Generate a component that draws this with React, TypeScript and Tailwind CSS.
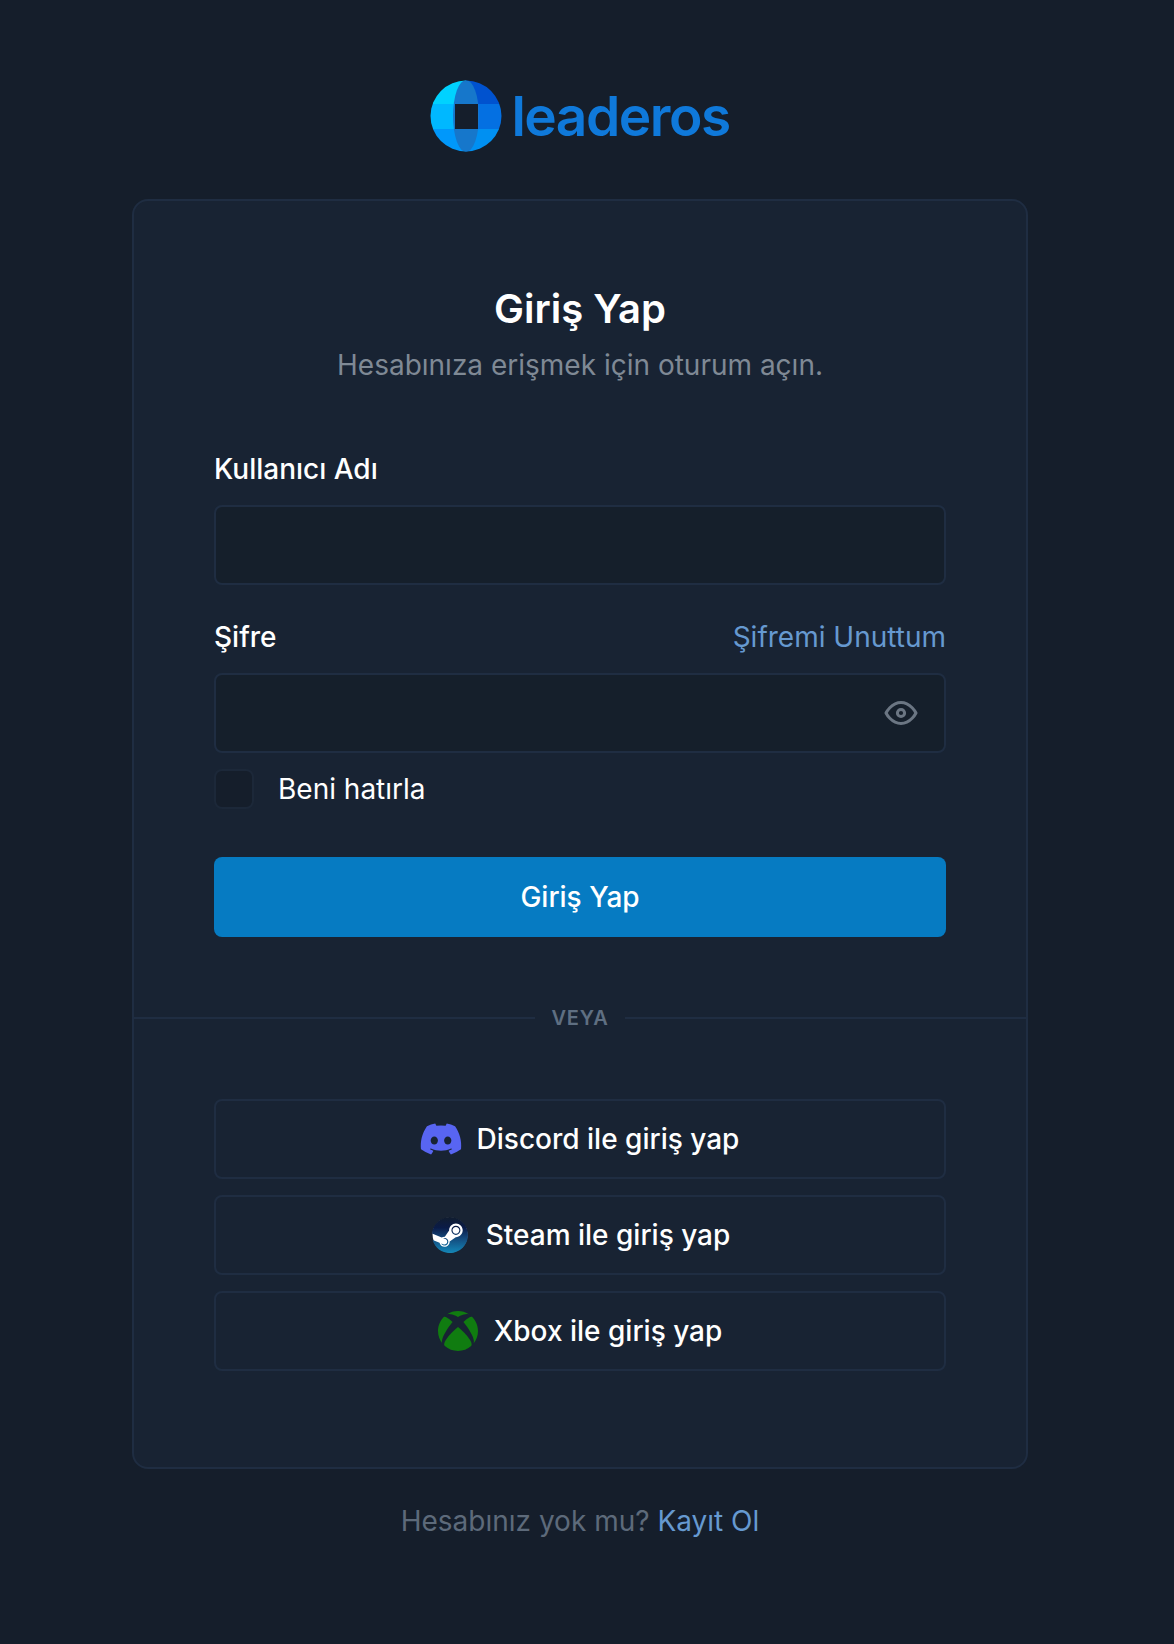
import { FaDiscord } from "react-icons/fa6";

function LeaderosLogo() {
  return (
    <div className="flex items-center gap-[9px]">
      <svg width="72" height="72" viewBox="0 0 72 72">
        <defs>
          <clipPath id="globe">
            <circle cx="36" cy="36" r="35.5" />
          </clipPath>
        </defs>
        <g clipPath="url(#globe)">
          <rect x="0" y="0" width="36" height="24" fill="#00d2ff" />
          <rect x="0" y="24" width="36" height="25" fill="#00b8ff" />
          <rect x="0" y="49" width="36" height="23" fill="#0098fb" />
          <rect x="36" y="0" width="36" height="24" fill="#0052cf" />
          <rect x="36" y="24" width="36" height="25" fill="#0470e2" />
          <rect x="36" y="49" width="36" height="23" fill="#0090f2" />
          <ellipse cx="36" cy="36" rx="13" ry="36" fill="#1677cb" />
          <rect x="25" y="24" width="23" height="25" fill="#151e2b" />
        </g>
      </svg>
      <span className="text-[55px] leading-none font-semibold tracking-[-1.5px] text-[#0f79da]">leaderos</span>
    </div>
  );
}

function SteamIcon() {
  return (
    <div className="flex w-10 justify-center">
      <svg width="36" height="36" viewBox="0 0 24 24">
        <defs>
          <linearGradient id="steam" x1="0" y1="0" x2="0" y2="1">
            <stop offset="0" stopColor="#111d2e" />
            <stop offset="0.3" stopColor="#0a1b48" />
            <stop offset="0.6" stopColor="#144b7e" />
            <stop offset="1" stopColor="#1387b8" />
          </linearGradient>
        </defs>
        <circle cx="12" cy="12" r="11.6" fill="#ffffff" />
        <path
          fill="url(#steam)"
          d="M11.979 0C5.678 0 .511 4.86.022 11.037l6.432 2.658c.545-.371 1.203-.59 1.912-.59.063 0 .125.004.188.006l2.861-4.142V8.91c0-2.495 2.028-4.524 4.524-4.524 2.494 0 4.524 2.031 4.524 4.527s-2.03 4.525-4.524 4.525h-.105l-4.076 2.911c0 .052.004.105.004.159 0 1.875-1.515 3.396-3.39 3.396-1.635 0-3.016-1.173-3.331-2.727L.436 15.27C1.862 20.307 6.486 24 11.979 24c6.627 0 11.999-5.373 11.999-12S18.605 0 11.979 0zM7.54 18.21l-1.473-.61c.262.543.714.999 1.314 1.25 1.297.539 2.793-.076 3.332-1.375.263-.63.264-1.319.005-1.949s-.75-1.121-1.377-1.383c-.624-.26-1.29-.249-1.878-.03l1.523.63c.956.4 1.409 1.5 1.009 2.455-.397.957-1.497 1.41-2.454 1.012H7.54zm11.415-9.303c0-1.662-1.353-3.015-3.015-3.015-1.665 0-3.015 1.353-3.015 3.015 0 1.665 1.35 3.015 3.015 3.015 1.663 0 3.015-1.35 3.015-3.015zm-5.273-.005c0-1.252 1.013-2.266 2.265-2.266 1.249 0 2.266 1.014 2.266 2.266 0 1.251-1.017 2.265-2.266 2.265-1.253 0-2.265-1.014-2.265-2.265z"
        />
      </svg>
    </div>
  );
}

function XboxIcon() {
  return (
    <svg width="40" height="40" viewBox="0 0 24 24" fill="#107c10">
      <path d="M4.102 21.033C6.211 22.881 8.977 24 12 24c3.026 0 5.789-1.119 7.902-2.967 1.877-1.912-4.316-8.709-7.902-11.417-3.582 2.708-9.779 9.505-7.898 11.417zm11.16-14.406c2.5 2.961 7.484 10.313 6.076 12.912C23.002 17.48 24 14.861 24 12.004c0-3.34-1.365-6.362-3.57-8.536 0 0-.027-.022-.082-.042-.063-.022-.152-.045-.281-.045-.592 0-1.985.434-4.805 3.246zM3.654 3.426c-.057.02-.082.041-.086.042C1.365 5.642 0 8.664 0 12.004c0 2.854.998 5.473 2.661 7.533-1.401-2.605 3.579-9.951 6.08-12.91-2.82-2.813-4.216-3.247-4.806-3.247-.131 0-.223.021-.281.046zM12 3.551S9.055 1.828 6.755 1.746c-.903-.033-1.454.295-1.521.339C7.379.646 9.659 0 11.984 0H12c2.334 0 4.605.646 6.766 2.085-.068-.046-.615-.372-1.52-.339C14.946 1.828 12 3.545 12 3.545v.006z" />
    </svg>
  );
}

function EyeIcon() {
  return (
    <svg
      width="36"
      height="36"
      viewBox="0 0 24 24"
      fill="none"
      stroke="#6b7683"
      strokeWidth="2"
      strokeLinejoin="round"
      className="absolute top-[22px] right-[27px]"
    >
      <path d="M2 12s3.5-7 10-7 10 7 10 7-3.5 7-10 7-10-7-10-7Z" />
      <circle cx="12" cy="12" r="2.4" />
    </svg>
  );
}

const SOCIALS = [
  { label: "Discord ile giriş yap", icon: <FaDiscord size={44} className="-mx-[2px] text-[#5865f2]" /> },
  { label: "Steam ile giriş yap", icon: <SteamIcon /> },
  { label: "Xbox ile giriş yap", icon: <XboxIcon /> },
];

export default function App() {
  return (
    <div className="min-h-[1644px] bg-[#151e2b] pt-[80px] pr-[14px] font-['Inter',sans-serif] text-white antialiased">
      <div className="flex justify-center">
        <LeaderosLogo />
      </div>

      <div className="mx-auto mt-[47px] w-[896px] rounded-2xl border-2 border-[#1f2d42] bg-[#182333] pt-[80px] pb-[96px]">
        <div className="text-center">
          <h1 className="text-[40px] leading-[56px] font-semibold">Giriş Yap</h1>
          <p className="text-[28px] leading-[56px] text-[#7f8995]">Hesabınıza erişmek için oturum açın.</p>
        </div>

        <form className="mt-[56px] flex flex-col px-20">
          <label className="text-[28px] leading-[40px] font-medium">Kullanıcı Adı</label>
          <input className="mt-[16px] h-20 rounded-lg border-2 border-[#1f2d42] bg-[#151f2b]" />

          <div className="mt-[32px] flex items-center justify-between">
            <label className="text-[28px] leading-[40px] font-medium">Şifre</label>
            <a className="text-[28px] leading-[40px] text-[#6699d0]">Şifremi Unuttum</a>
          </div>
          <div className="relative mt-[16px]">
            <input type="password" className="h-20 w-full rounded-lg border-2 border-[#1f2d42] bg-[#151f2b]" />
            <EyeIcon />
          </div>

          <div className="mt-[16px] flex items-center gap-[24px]">
            <div className="h-10 w-10 rounded-lg border-2 border-[#1c2839] bg-[#151e2b]" />
            <span className="text-[28px] leading-[40px]">Beni hatırla</span>
          </div>

          <button type="button" className="mt-[48px] h-20 rounded-lg bg-[#067bc2] text-[28px] font-medium">
            Giriş Yap
          </button>
        </form>

        <div className="mt-[67px] flex items-center">
          <div className="h-0.5 flex-1 bg-[#1f2d42]" />
          <span className="px-[17px] text-[20px] leading-[28px] font-semibold tracking-[0.75px] text-[#5f6f82]">VEYA</span>
          <div className="h-0.5 flex-1 bg-[#1f2d42]" />
        </div>

        <div className="mt-[67px] flex flex-col gap-4 px-20">
          {SOCIALS.map((s) => (
            <button
              key={s.label}
              type="button"
              className="flex h-20 items-center justify-center gap-4 rounded-lg border-2 border-[#1f2d42] text-[28px] font-medium"
            >
              {s.icon}
              {s.label}
            </button>
          ))}
        </div>
      </div>

      <p className="mt-[32px] text-center text-[28px] leading-[40px] text-[#5d6a7a]">
        Hesabınız yok mu? <a className="text-[#6699d0]">Kayıt Ol</a>
      </p>
    </div>
  );
}
